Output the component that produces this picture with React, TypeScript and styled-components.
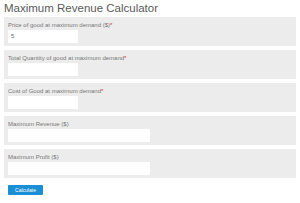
import styled, { createGlobalStyle } from "styled-components"

const GlobalStyle = createGlobalStyle`
   html, body {
      margin: 0;
      padding: 0;
      background: #fff;
      font-family: "Liberation Sans", Arial, sans-serif;
   }
`

const Page = styled.div`
   width: 300px;
   padding: 2px 4px 0 4px;
   box-sizing: border-box;
`

const Title = styled.h1`
   margin: 0 0 2px 0;
   font-size: 11.5px;
   line-height: 13px;
   font-weight: normal;
   color: #5a5a5a;
`

const Form = styled.div`
   display: flex;
   flex-direction: column;
   gap: 4px;
`

const Panel = styled.div`
   background: #ececec;
   padding: 4px 4px 3px 4px;
   height: 29px;
   box-sizing: border-box;
   display: flex;
   flex-direction: column;
   gap: 1px;
`

const Label = styled.label`
   font-size: 6px;
   line-height: 8px;
   color: #777;
`

const Required = styled.span`
   color: #e03030;
`

const Input = styled.div<{ $wide?: boolean }>`
   width: ${p => (p.$wide ? "142px" : "70px")};
   height: 13px;
   background: #fff;
   font-size: 6px;
   line-height: 13px;
   padding-left: 3px;
   box-sizing: border-box;
   color: #666;
`

const ButtonRow = styled.div`
   padding: 7px 4px 6px 4px;
`

const Button = styled.button`
   display: block;
   width: 35px;
   height: 10px;
   padding: 0;
   border: none;
   border-radius: 1px;
   background: #1a8fd6;
   color: #fff;
   font-family: "Liberation Sans", Arial, sans-serif;
   font-size: 5px;
   line-height: 10px;
`

const fields = [
   { label: "Price of good at maximum demand ($)", required: true, value: "5" },
   { label: "Total Quantity of good at maximum demand", required: true, value: "" },
   { label: "Cost of Good at maximum demand", required: true, value: "" },
   { label: "Maximum Revenue ($)", required: false, value: "", wide: true },
   { label: "Maximum Profit ($)", required: false, value: "", wide: true },
]

export default function App() {
   return <Page>
      <GlobalStyle />
      <Title>Maximum Revenue Calculator</Title>
      <Form>
         {fields.map(f => <Panel key={f.label}>
            <Label>{f.label}{f.required && <Required>*</Required>}</Label>
            <Input $wide={f.wide}>{f.value}</Input>
         </Panel>)}
      </Form>
      <ButtonRow>
         <Button>Calculate</Button>
      </ButtonRow>
   </Page>
}
